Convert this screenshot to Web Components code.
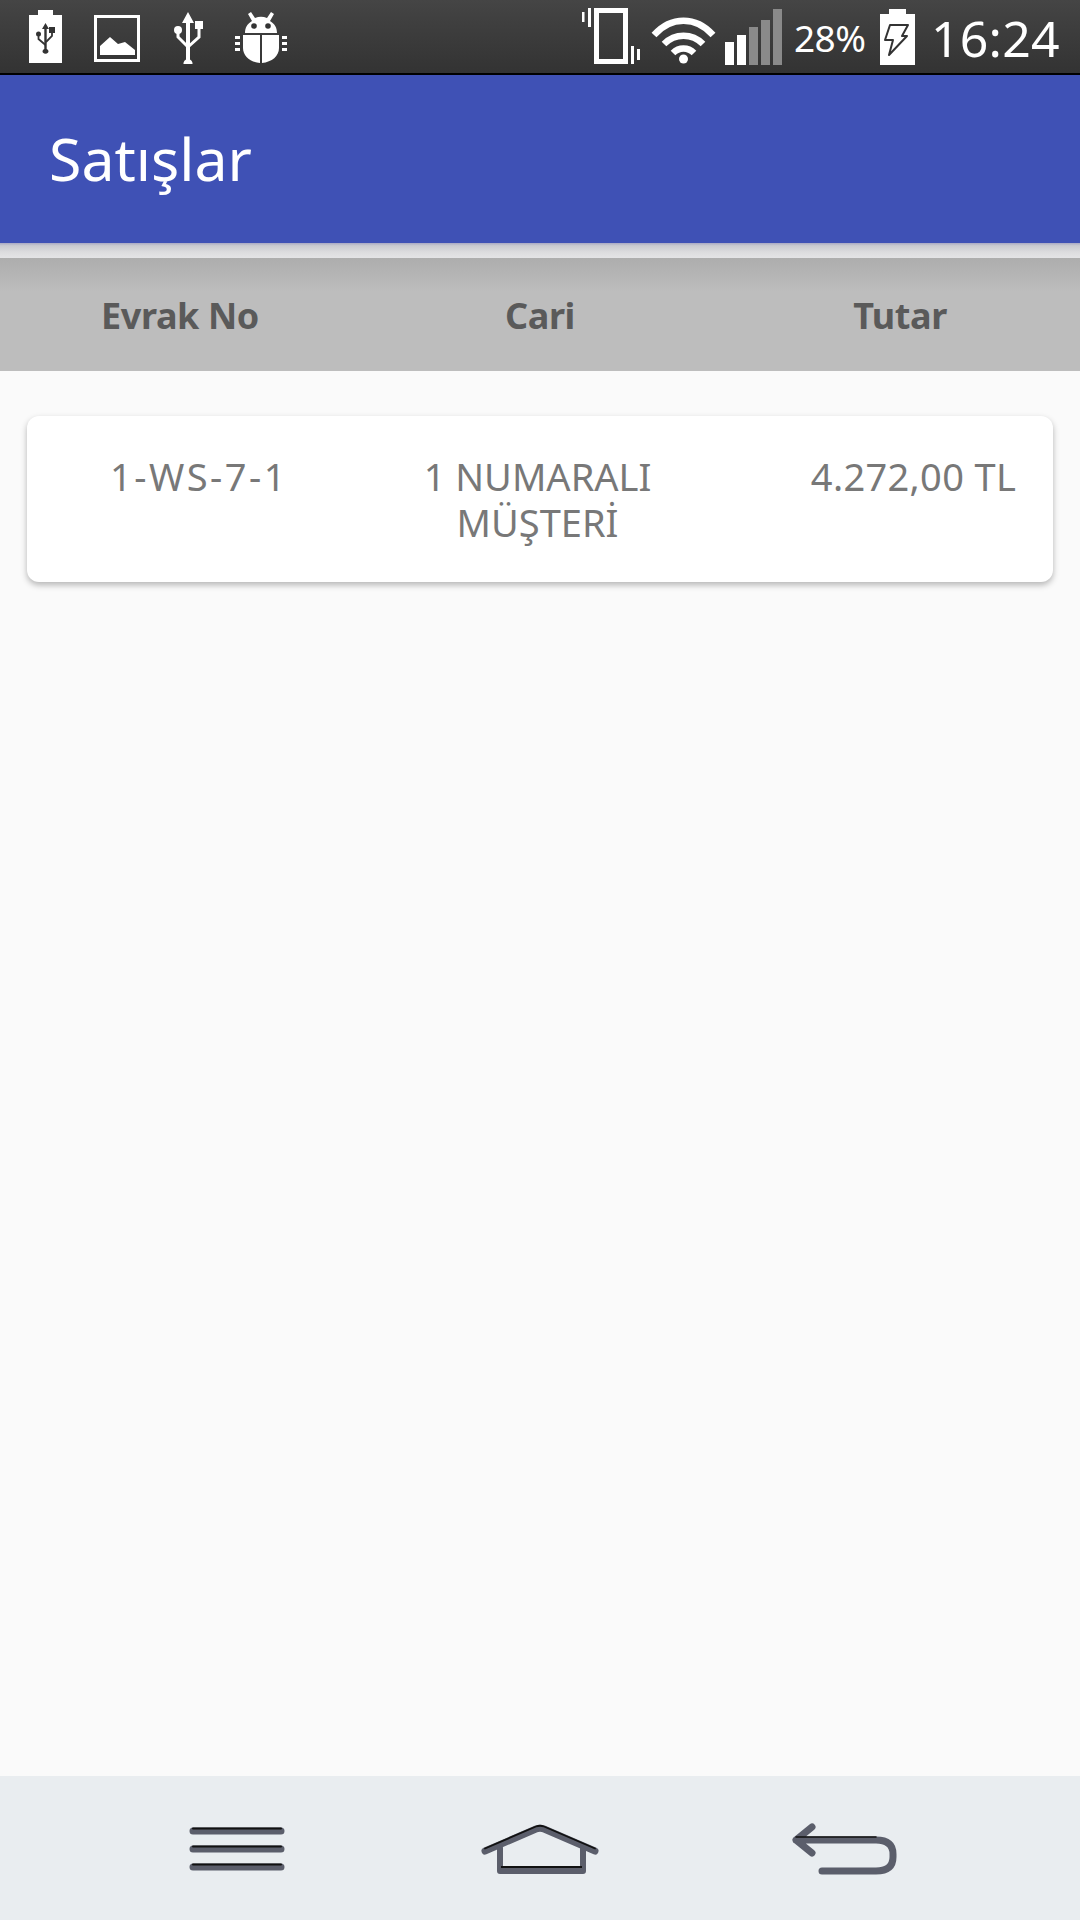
<!DOCTYPE html>
<html lang="tr"><head><meta charset="utf-8"><style>
html,body{margin:0;padding:0;background:#fafafa}
body{width:1080px;height:1920px;font-family:"Noto Sans","Open Sans",sans-serif}
app-screen{height:1920px}
</style></head><body>
<app-screen>
<status-bar></status-bar>
<app-bar>Satışlar</app-bar>
<table-header><span>Evrak No</span><span>Cari</span><span>Tutar</span></table-header>
<sale-list>
<sale-card><span slot="no">1-WS-7-1</span><span slot="cari">1 NUMARALI MÜŞTERİ</span><span slot="tutar">4.272,00 TL</span></sale-card>
</sale-list>
<nav-bar></nav-bar>
</app-screen>
<script>
function def(name,html){customElements.define(name,class extends HTMLElement{constructor(){super();this.attachShadow({mode:'open'}).innerHTML=html}})}
def('app-screen',`<style>:host{display:flex;flex-direction:column;width:1080px;background:#fafafa}</style><slot></slot>`);
def('status-bar',`<style>
:host{display:flex;box-sizing:border-box;height:75px;border-bottom:2px solid #000;background:linear-gradient(#454545,#3f3f3f 30%,#333);color:#fff;position:relative;align-items:flex-start}
svg{display:block;flex:none;fill:#fff}
.pct{font-size:37px;line-height:40px;margin:18px 0 0 12px;width:71px;letter-spacing:-.6px;white-space:nowrap}
.time{font-size:50px;line-height:60px;margin:8px 0 0 16px;white-space:nowrap;font-weight:400;letter-spacing:.2px}
</style>
<svg style="margin:10px 0 0 29px" width="33" height="53" viewBox="0 0 33 53"><path d="M9 0h15v5h9v48H0V5h9z"/><g fill="#333" stroke="#333"><path d="M16.500 13l3.500 6h-2.300v20a3 2.500 0 1 1-2.400 0V19H13z" stroke="none"/><circle cx="9.500" cy="24" r="2.500" stroke="none"/><rect x="20" y="17" width="6" height="6" stroke="none"/><path d="M9.500 25v4l7 6M23 22v4l-6 6" fill="none" stroke-width="1.800"/></g></svg>
<svg style="margin:15px 0 0 32px" width="46" height="47" viewBox="0 0 46 47"><path fill-rule="evenodd" d="M0 0h46v47H0zM3 3v41h40V3z"/><path d="M6 40V31L16 22l8 7 7-2 10 8v5z"/></svg>
<svg style="margin:12px 0 0 33px" width="30" height="52" viewBox="0 0 30 52"><path d="M15 0l6 11h-4v36.500a4.500 4.500 0 1 1-4 0V11H9z"/><circle cx="5" cy="18" r="4"/><rect x="22" y="9" width="8" height="8"/><path d="M5 19v6l10 10M26 16v9l-11 10" fill="none" stroke="#fff" stroke-width="3"/></svg>
<svg style="margin:12px 0 0 32px" width="52" height="51" viewBox="0 0 52 51"><path d="M13 2l3-2 4 6a15 15 0 0 1 12 0l4-6 3 2-4 7c5 3 7 7 7 12H10c0-5 2-9 7-12z"/><path d="M8 23h17v28C15 50 8 44 8 36zM27 23h17v13c0 8-7 14-17 15zM0 24h5v3H0zM0 30h5v3H0zM0 36h5v3H0zM47 24h5v3h-5zM47 30h5v3h-5zM47 36h5v3h-5z"/><circle cx="19" cy="14" r="2.800" fill="#333"/><circle cx="33" cy="14" r="2.800" fill="#333"/></svg>
<svg style="margin:8px 0 0 295px" width="58" height="56" viewBox="0 0 58 56"><path fill-rule="evenodd" d="M12 0h34v56H12zM17 5v46h24V5z"/><path d="M0 4h2.500v10H0zM6 0h3v19H6zM49 38h3v18h-3zM55 41h3v11h-3z"/></svg>
<svg style="margin:16px 0 0 11px" width="65" height="48" viewBox="0 0 65 48"><g fill="none" stroke="#fff" stroke-width="6.500"><path d="M3 19C20 0 45 0 62 19"/><path d="M13 28c11-11 28-11 39 0"/><path d="M22 37c6-6 15-6 21 0" /></g><circle cx="32.500" cy="43" r="4.500"/></svg>
<svg style="margin:9px 0 0 9px" width="57" height="56" viewBox="0 0 57 56"><rect y="33" width="9" height="23"/><rect x="12" y="26" width="9" height="30"/><g fill="#8a8a8a"><rect x="24" y="18" width="9" height="38"/><rect x="36" y="11" width="9" height="45"/><rect x="48" y="0" width="9" height="56"/></g></svg>
<span class="pct">28%</span>
<svg style="margin:9px 0 0 15px" width="35" height="56" viewBox="0 0 35 56"><path d="M9 0h17v5h9v51H0V5h9z"/><path d="M10 16h18l-6 11h5L9 46l4-15H5z" fill="#fff" stroke="#333" stroke-width="2" stroke-linejoin="round"/></svg>
<span class="time">16:24</span>`);
def('app-bar',`<style>
:host{display:block;box-sizing:border-box;height:168px;background:#3f51b5;color:#fff;font-size:59px;line-height:68px;padding:49px 0 0 49px;position:relative}
:host::after{content:"";position:absolute;left:0;right:0;top:100%;height:15px;background:linear-gradient(#a9a9c4,#c9cad0 18%,#dcdcde 60%,#e4e4e6)}
</style><slot></slot>`);
def('table-header',`<style>
:host{display:grid;grid-template-columns:repeat(3,1fr);margin-top:15px;height:113px;box-sizing:border-box;background:linear-gradient(#adadad,#bdbdbd 30%,#bdbdbd);color:#5a5a5a;font-size:36px;font-weight:700;text-align:center;line-height:50px;padding-top:33px;letter-spacing:-.4px}
</style><slot></slot>`);
def('sale-list',`<style>:host{display:block;flex:1;padding:45px 27px 0}</style><slot></slot>`);
def('sale-card',`<style>
:host{display:grid;grid-template-columns:344px 333px 349px;box-sizing:border-box;height:166px;background:#fff;border-radius:12px;box-shadow:0 3px 6px rgba(0,0,0,.28);color:#787878;font-size:38px;line-height:46px;text-align:center;padding-top:37px}
.n{letter-spacing:2.500px}
.t{padding-left:70px;box-sizing:border-box;letter-spacing:.33px}
.c{padding:0 40px}
</style><div class="n"><slot name="no"></slot></div><div class="c"><slot name="cari"></slot></div><div class="t"><slot name="tutar"></slot></div>`);
def('nav-bar',`<style>
:host{display:flex;align-items:flex-start;box-sizing:border-box;height:144px;background:#e9edf0}
svg{display:block;flex:none;fill:none;stroke:#5b5e6b;stroke-width:7;stroke-linecap:round;stroke-linejoin:round;overflow:visible}
</style>
<svg style="margin:51px 0 0 190px" width="94" height="44" viewBox="0 0 94 44"><path d="M3 4h88M3 22h88M3 40h88"/><path d="M3 1.500h88M3 19.500h88M3 37.500h88" stroke="#111" stroke-width="2"/></svg>
<svg style="margin:48px 0 0 198px" width="116" height="52" viewBox="0 0 116 52"><path d="M3 27L54 5q4-1.500 8 0l51 22"/><path d="M3 24.500L54 2.500q4-1.500 8 0L113 24.500" stroke="#111" stroke-width="1.800"/><path d="M18 24v23h83V24" stroke-width="6"/><path d="M19 43h81" stroke="#111" stroke-width="2" stroke-linecap="butt"/></svg>
<svg style="margin:47px 0 0 194px" width="105" height="52" viewBox="0 0 105 52"><path d="M20 4L4 17l16 13M4 17h80q17 0 17 14v3q0 14-17 14H30"/><path d="M4 14h80" stroke="#111" stroke-width="1.500"/></svg>`);
</script>
</body></html>
